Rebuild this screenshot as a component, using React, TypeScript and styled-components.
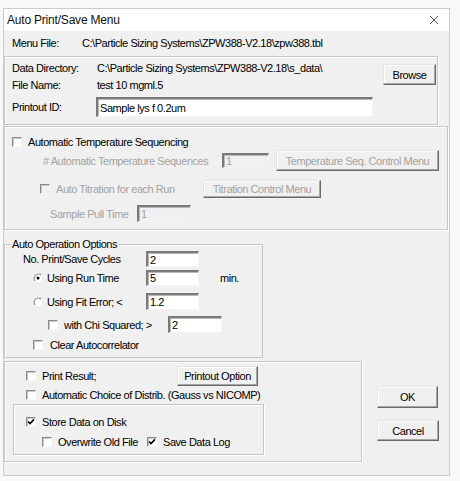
import React from "react";
import styled, { createGlobalStyle } from "styled-components";

const GlobalStyle = createGlobalStyle`
  html, body {
    margin: 0;
    padding: 0;
    background: #f7f8fa;
  }
  body {
    font-family: "Liberation Sans", Arial, sans-serif;
    font-size: 11px;
    letter-spacing: -0.45px;
    color: #000;
  }
`;

const Page = styled.div`
  padding: 8px 0 0 3px;
  width: 460px;
  height: 481px;
  box-sizing: border-box;
`;

const Window = styled.div`
  width: 447px;
  height: 468px;
  box-sizing: border-box;
  border: 1px solid #c9ccd1;
  display: flex;
  flex-direction: column;
  background: #f0f0f0;
`;

const TitleBar = styled.div`
  height: 22px;
  flex: none;
  background: #fff;
  display: flex;
  align-items: center;
  padding: 0 10px 0 3px;
`;

const Title = styled.div`
  font-size: 12px;
  letter-spacing: -0.2px;
  color: #111;
  flex: 1;
`;

const Body = styled.div`
  flex: 1;
  display: flex;
  flex-direction: column;
`;

interface RowProps {
  $h: number;
  $mt?: number;
  $pl?: number;
}

const Row = styled.div<RowProps>`
  display: flex;
  align-items: center;
  height: ${(p) => p.$h}px;
  margin-top: ${(p) => p.$mt || 0}px;
  padding-left: ${(p) => p.$pl || 0}px;
  flex: none;
`;

interface TextProps {
  $w?: number;
  $ml?: number;
  $off?: boolean;
}

const Text = styled.span<TextProps>`
  display: inline-block;
  white-space: nowrap;
  width: ${(p) => (p.$w ? `${p.$w}px` : "auto")};
  margin-left: ${(p) => p.$ml || 0}px;
  color: ${(p) => (p.$off ? "#a3a3a3" : "#000")};
  flex: none;
`;

interface GroupProps {
  $w: number;
  $mt?: number;
  $ml?: number;
  $pb?: number;
}

const Group = styled.div<GroupProps>`
  width: ${(p) => p.$w}px;
  margin-top: ${(p) => p.$mt || 0}px;
  margin-left: ${(p) => p.$ml || 0}px;
  padding-bottom: ${(p) => p.$pb || 0}px;
  box-sizing: border-box;
  border: 1px solid #c6c6c6;
  box-shadow: inset 1px 1px 0 #fff, 1px 1px 0 #fff;
  flex: none;
`;

const TopGroup = styled(Group)`
  display: flex;
  align-items: flex-start;
`;

const Column = styled.div`
  display: flex;
  flex-direction: column;
  padding-left: 7px;
`;

const Fieldset = styled.fieldset`
  width: 259px;
  margin: 7px 0 0 0;
  padding: 0 0 5px 0;
  box-sizing: border-box;
  border: 1px solid #c6c6c6;
  box-shadow: inset 1px 1px 0 #fff;
  min-width: 0;
  flex: none;
`;

const Legend = styled.legend`
  margin-left: 6px;
  padding: 0 1px;
  line-height: 14px;
`;

interface BoxProps {
  $w: number;
  $h: number;
  $ml?: number;
  $off?: boolean;
}

const TextBox = styled.div<BoxProps>`
  width: ${(p) => p.$w}px;
  height: ${(p) => p.$h}px;
  margin-left: ${(p) => p.$ml || 0}px;
  box-sizing: border-box;
  background: ${(p) => (p.$off ? "#f0f0f0" : "#fff")};
  border-style: solid;
  border-width: 2px 1px 1px 2px;
  border-color: #7a7a7a #f4f4f4 #f4f4f4 #7a7a7a;
  box-shadow: inset 1px 1px 0 #b8b8b8;
  color: ${(p) => (p.$off ? "#a3a3a3" : "#000")};
  display: flex;
  align-items: center;
  padding-left: 2px;
  white-space: nowrap;
  overflow: hidden;
  flex: none;
`;

const Button = styled.div<BoxProps>`
  width: ${(p) => p.$w}px;
  height: ${(p) => p.$h}px;
  margin-left: ${(p) => p.$ml || 0}px;
  box-sizing: border-box;
  background: #f0f0f0;
  border: 1px solid;
  border-color: #e4e4e4 #6a6a6a #6a6a6a #e4e4e4;
  box-shadow: inset -1px -1px 0 #a6a6a6, inset 1px 1px 0 #fff;
  color: ${(p) => (p.$off ? "#a3a3a3" : "#000")};
  display: flex;
  align-items: center;
  justify-content: center;
  white-space: nowrap;
  flex: none;
`;

const BrowseButton = styled(Button)`
  margin: 7px 1px 0 auto;
`;

const Check = styled.span<{ $ml?: number; $off?: boolean }>`
  width: 10px;
  height: 10px;
  margin-left: ${(p) => p.$ml || 0}px;
  margin-right: 6px;
  box-sizing: border-box;
  border-style: solid;
  border-width: 1px;
  border-color: #8a8a8a #f8f8f8 #f8f8f8 #8a8a8a;
  box-shadow: inset 1px 1px 0 #c8c8c8;
  background: ${(p) => (p.$off ? "#f0f0f0" : "#fff")};
  display: inline-flex;
  align-items: center;
  justify-content: center;
  flex: none;
`;

const CheckBox: React.FC<{ checked?: boolean; ml?: number; off?: boolean }> = ({
  checked,
  ml,
  off,
}) => (
  <Check $ml={ml} $off={off}>
    {checked && (
      <svg width="8" height="8" viewBox="0 0 8 8">
        <path d="M1 3.5 L3 5.6 L7 1.4" fill="none" stroke="#000" strokeWidth="1.6" />
      </svg>
    )}
  </Check>
);

const RadioWrap = styled.span<{ $ml?: number }>`
  width: 10px;
  height: 10px;
  margin-left: ${(p) => p.$ml || 0}px;
  margin-right: 4px;
  display: inline-flex;
  flex: none;
`;

const Radio: React.FC<{ checked?: boolean; ml?: number }> = ({ checked, ml }) => (
  <RadioWrap $ml={ml}>
    <svg width="10" height="10" viewBox="0 0 10 10">
      <circle cx="5" cy="5" r="4.3" fill="#fff" />
      <path d="M8 2 A4.3 4.3 0 0 0 2 8" fill="none" stroke="#8a8a8a" strokeWidth="1.1" />
      {checked && <circle cx="5" cy="5" r="1.5" fill="#000" />}
    </svg>
  </RadioWrap>
);

const BottomArea = styled.div`
  display: flex;
  align-items: flex-start;
  margin-top: 3px;
`;

const ButtonColumn = styled.div`
  display: flex;
  flex-direction: column;
  margin-left: 15px;
  padding-top: 25px;
  gap: 12px;
`;

const CloseIcon = () => (
  <svg width="10" height="10" viewBox="0 0 10 10">
    <path d="M1 1 L9 9 M9 1 L1 9" stroke="#555" strokeWidth="1" />
  </svg>
);

export default function App() {
  return (
    <Page>
      <GlobalStyle />
      <Window>
        <TitleBar>
          <Title>Auto Print/Save Menu</Title>
          <CloseIcon />
        </TitleBar>
        <Body>
          <Row $h={16} $mt={4} $pl={8}>
            <Text $w={70}>Menu File:</Text>
            <Text>C:\Particle Sizing Systems\ZPW388-V2.18\zpw388.tbl</Text>
          </Row>

          <TopGroup $w={434} $mt={5} $pb={7}>
            <Column>
              <Row $h={16} $mt={3}>
                <Text $w={85}>Data Directory:</Text>
                <Text>C:\Particle Sizing Systems\ZPW388-V2.18\s_data\</Text>
              </Row>
              <Row $h={16} $mt={1}>
                <Text $w={85}>File Name:</Text>
                <Text>test 10 mgml.5</Text>
              </Row>
              <Row $h={20} $mt={4}>
                <Text $w={84}>Printout ID:</Text>
                <TextBox $w={277} $h={20}>
                  Sample lys f 0.2um
                </TextBox>
              </Row>
            </Column>
            <BrowseButton $w={53} $h={21}>
              Browse
            </BrowseButton>
          </TopGroup>

          <Group $w={444} $mt={1} $pb={7}>
            <Row $h={16} $mt={7} $pl={7}>
              <CheckBox />
              <Text>Automatic Temperature Sequencing</Text>
            </Row>
            <Row $h={21} $pl={7}>
              <Text $w={179} $ml={31} $off>
                # Automatic Temperature Sequences
              </Text>
              <TextBox $w={47} $h={15} $off>
                1
              </TextBox>
              <Button $w={163} $h={21} $ml={7} $off>
                Temperature Seq. Control Menu
              </Button>
            </Row>
            <Row $h={18} $mt={9} $pl={7}>
              <CheckBox ml={28} off />
              <Text $w={147} $off>
                Auto Titration for each Run
              </Text>
              <Button $w={118} $h={18} $off>
                Titration Control Menu
              </Button>
            </Row>
            <Row $h={17} $mt={7} $pl={7}>
              <Text $w={87} $ml={38} $off>
                Sample Pull Time
              </Text>
              <TextBox $w={54} $h={17} $off>
                1
              </TextBox>
            </Row>
          </Group>

          <Fieldset>
            <Legend>Auto Operation Options</Legend>
            <Row $h={16} $pl={18}>
              <Text $w={123}>No. Print/Save Cycles</Text>
              <TextBox $w={53} $h={16}>
                2
              </TextBox>
            </Row>
            <Row $h={17} $mt={2} $pl={28}>
              <Radio checked />
              <Text $w={99}>Using Run Time</Text>
              <TextBox $w={53} $h={16}>
                5
              </TextBox>
              <Text $ml={21}>min.</Text>
            </Row>
            <Row $h={17} $mt={7} $pl={28}>
              <Radio />
              <Text $w={99}>Using Fit Error; &lt;</Text>
              <TextBox $w={53} $h={17}>
                1.2
              </TextBox>
            </Row>
            <Row $h={17} $mt={6} $pl={43}>
              <CheckBox />
              <Text $w={104}>with Chi Squared; &gt;</Text>
              <TextBox $w={54} $h={17}>
                2
              </TextBox>
            </Row>
            <Row $h={14} $mt={5} $pl={28}>
              <CheckBox />
              <Text $ml={1}>Clear Autocorrelator</Text>
            </Row>
          </Fieldset>

          <BottomArea>
            <Group $w={358} $pb={6}>
              <Row $h={20} $mt={4} $pl={21}>
                <CheckBox />
                <Text $w={135}>Print Result;</Text>
                <Button $w={81} $h={20}>
                  Printout Option
                </Button>
              </Row>
              <Row $h={14} $mt={2} $pl={21}>
                <CheckBox />
                <Text>Automatic Choice of Distrib. (Gauss vs NICOMP)</Text>
              </Row>
              <Group $w={251} $ml={8} $mt={2} $pb={5}>
                <Row $h={14} $mt={10} $pl={12}>
                  <CheckBox checked />
                  <Text>Store Data on Disk</Text>
                </Row>
                <Row $h={14} $mt={6} $pl={28}>
                  <CheckBox />
                  <Text $w={89}>Overwrite Old File</Text>
                  <CheckBox checked />
                  <Text>Save Data Log</Text>
                </Row>
              </Group>
            </Group>
            <ButtonColumn>
              <Button $w={61} $h={22}>
                OK
              </Button>
              <Button $w={62} $h={21}>
                Cancel
              </Button>
            </ButtonColumn>
          </BottomArea>
        </Body>
      </Window>
    </Page>
  );
}
